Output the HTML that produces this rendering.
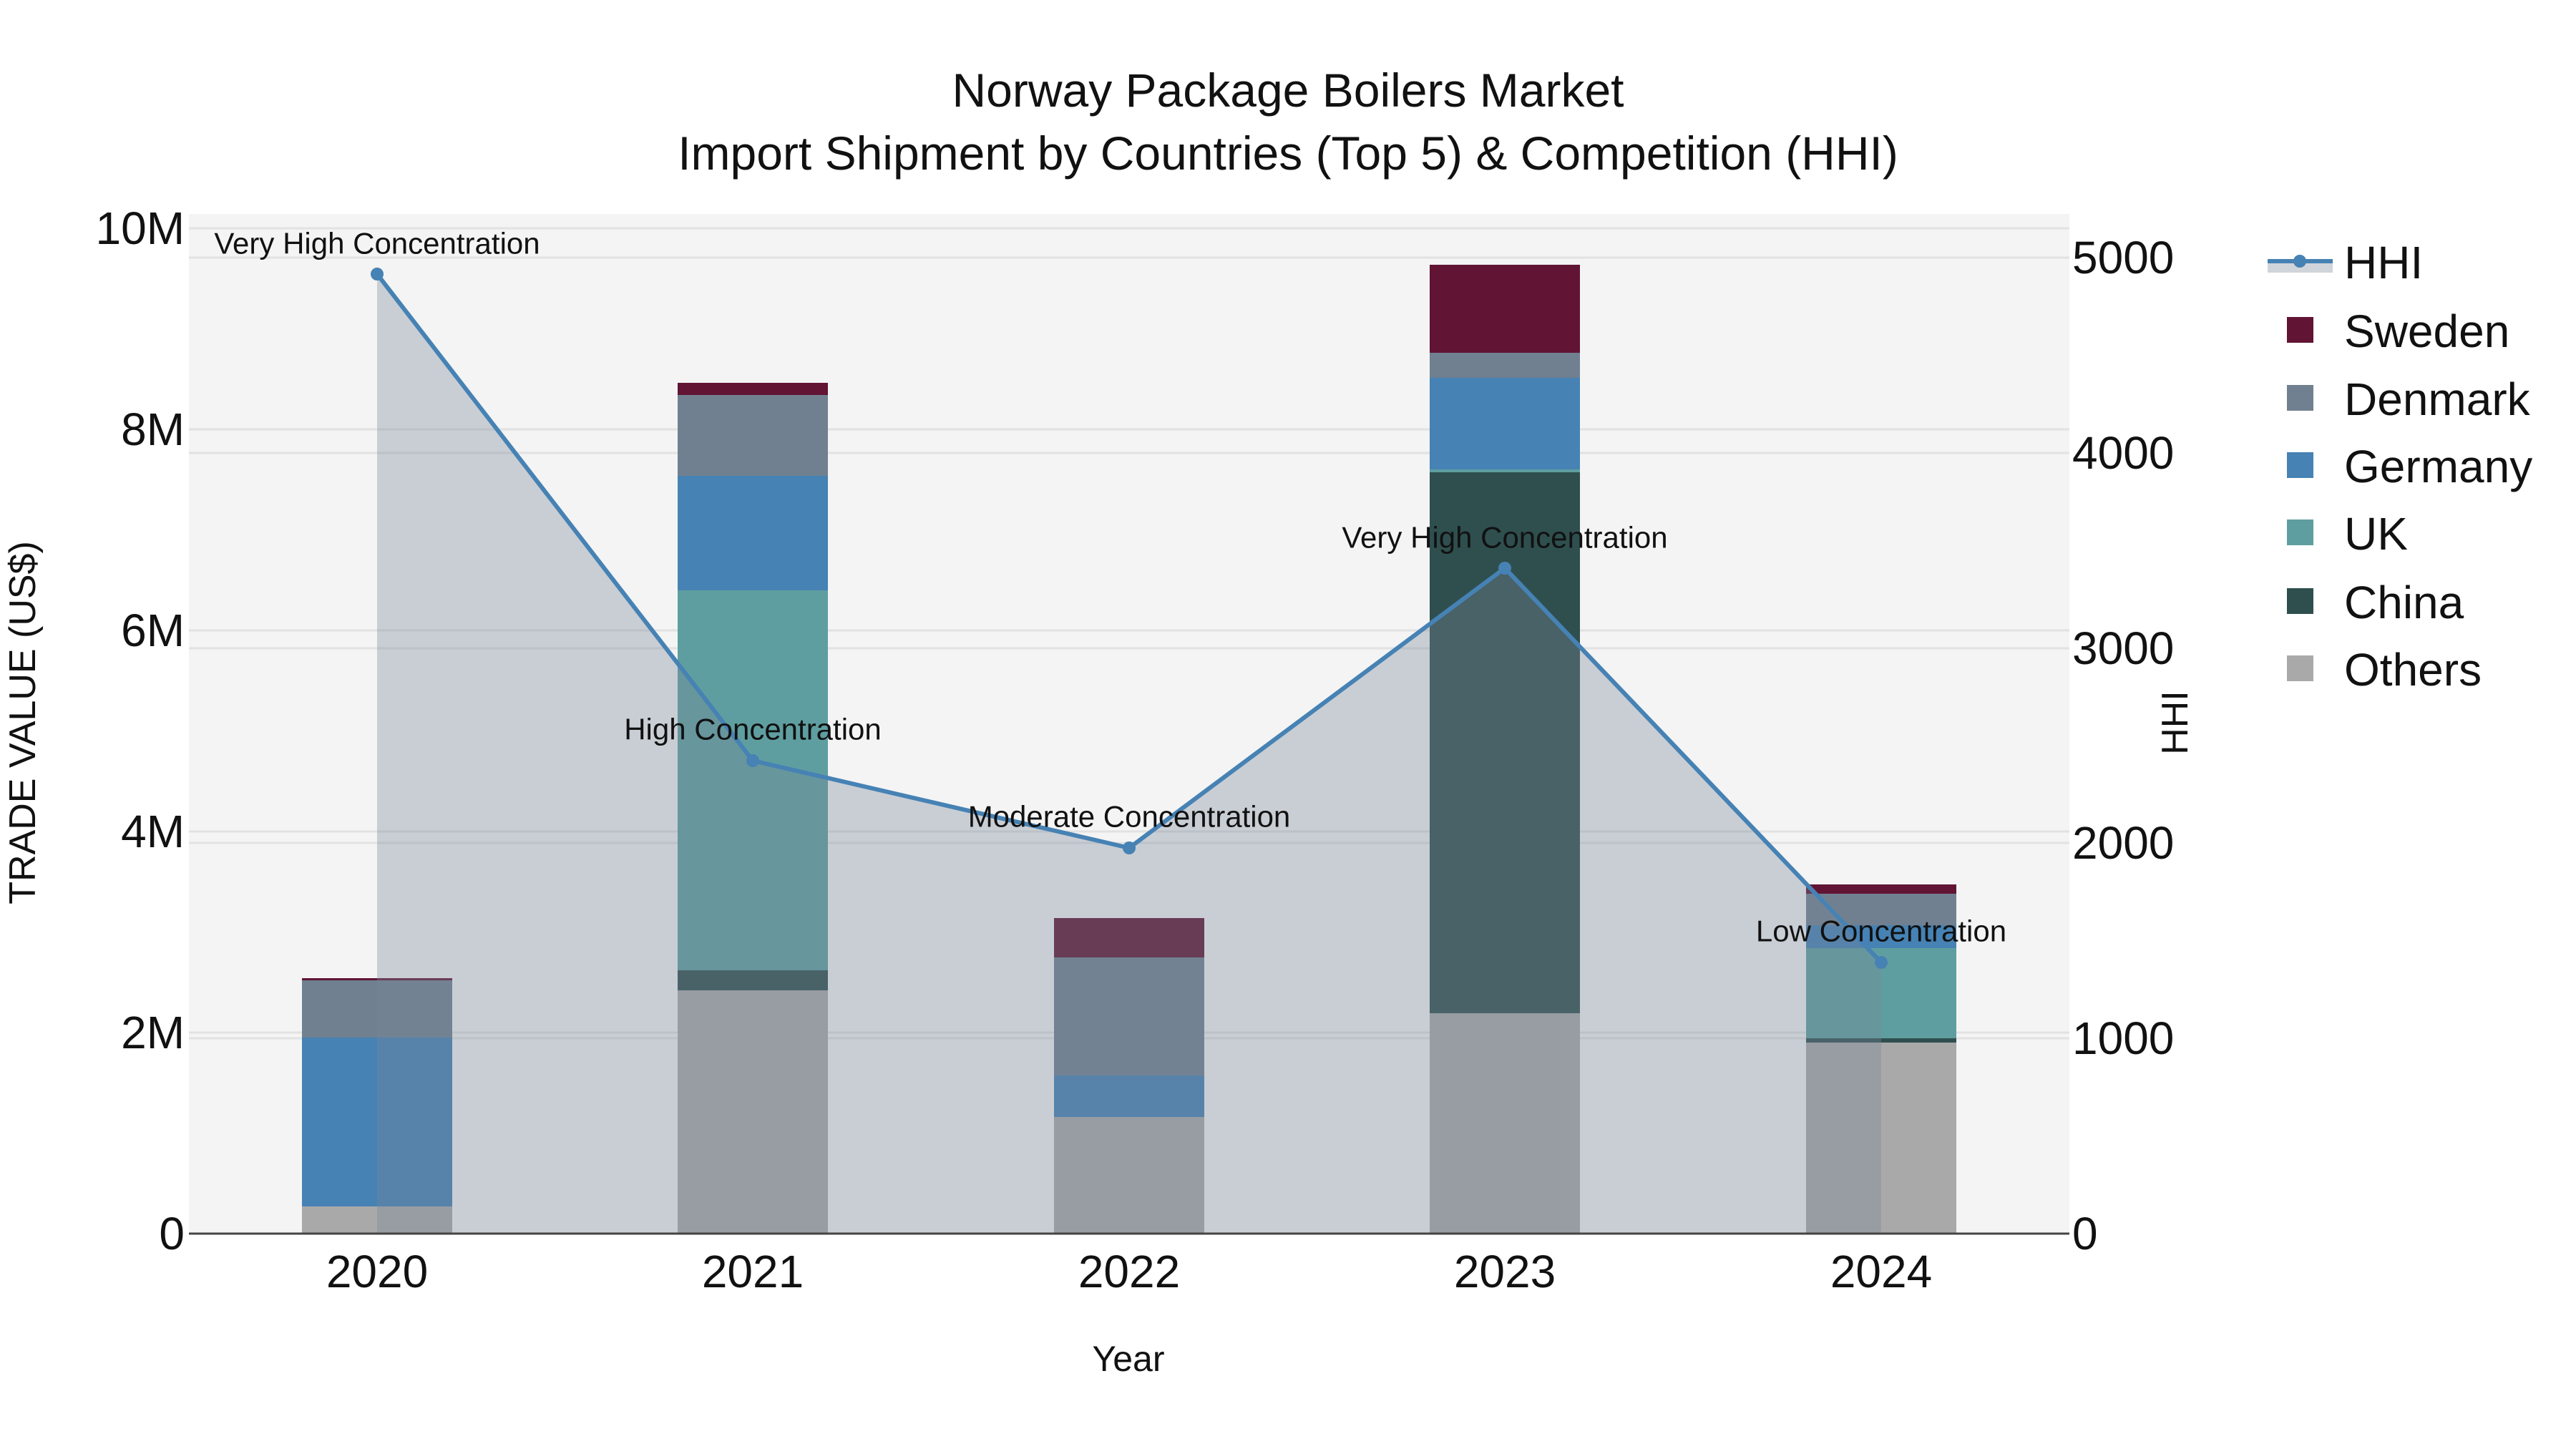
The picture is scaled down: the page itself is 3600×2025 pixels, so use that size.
<!DOCTYPE html>
<html><head><meta charset="utf-8"><style>
html,body{margin:0;padding:0;background:#fff;}
svg{display:block;}
text{font-family:"Liberation Sans",Arial,sans-serif;fill:#111;}
</style></head><body>
<svg width="3600" height="2025" viewBox="0 0 3600 2025" xmlns="http://www.w3.org/2000/svg">
<rect x="0" y="0" width="3600" height="2025" fill="#fff"/>
<rect x="264" y="299" width="2628" height="1425" fill="#f4f4f4"/>
<g stroke="#e2e2e2" stroke-width="3">
<line x1="264" x2="2892" y1="1443" y2="1443"/><line x1="264" x2="2892" y1="1162" y2="1162"/>
<line x1="264" x2="2892" y1="881" y2="881"/><line x1="264" x2="2892" y1="600" y2="600"/>
<line x1="264" x2="2892" y1="319" y2="319"/>
<line x1="264" x2="2892" y1="1451" y2="1451"/><line x1="264" x2="2892" y1="1178" y2="1178"/>
<line x1="264" x2="2892" y1="906" y2="906"/><line x1="264" x2="2892" y1="633" y2="633"/>
<line x1="264" x2="2892" y1="360" y2="360"/>
</g>
<g>
<rect x="422" y="1686" width="210" height="38" fill="#a9a9a9"/>
<rect x="422" y="1450" width="210" height="236" fill="#4682b4"/>
<rect x="422" y="1370" width="210" height="80" fill="#708090"/>
<rect x="422" y="1367" width="210" height="3" fill="#611434"/>
<rect x="947" y="1384" width="210" height="340" fill="#a9a9a9"/>
<rect x="947" y="1356" width="210" height="28" fill="#2f4f4f"/>
<rect x="947" y="825" width="210" height="531" fill="#5f9ea0"/>
<rect x="947" y="665" width="210" height="160" fill="#4682b4"/>
<rect x="947" y="552" width="210" height="113" fill="#708090"/>
<rect x="947" y="535" width="210" height="17" fill="#611434"/>
<rect x="1473" y="1561" width="210" height="163" fill="#a9a9a9"/>
<rect x="1473" y="1503" width="210" height="58" fill="#4682b4"/>
<rect x="1473" y="1338" width="210" height="165" fill="#708090"/>
<rect x="1473" y="1283" width="210" height="55" fill="#611434"/>
<rect x="1998" y="1416" width="210" height="308" fill="#a9a9a9"/>
<rect x="1998" y="660" width="210" height="756" fill="#2f4f4f"/>
<rect x="1998" y="656" width="210" height="4" fill="#5f9ea0"/>
<rect x="1998" y="528" width="210" height="128" fill="#4682b4"/>
<rect x="1998" y="493" width="210" height="35" fill="#708090"/>
<rect x="1998" y="370" width="210" height="123" fill="#611434"/>
<rect x="2524" y="1457" width="210" height="267" fill="#a9a9a9"/>
<rect x="2524" y="1451" width="210" height="6" fill="#2f4f4f"/>
<rect x="2524" y="1325" width="210" height="126" fill="#5f9ea0"/>
<rect x="2524" y="1293" width="210" height="32" fill="#4682b4"/>
<rect x="2524" y="1249" width="210" height="44" fill="#708090"/>
<rect x="2524" y="1236" width="210" height="13" fill="#611434"/>
</g>
<polygon points="527,1724 527,383 1052,1063 1578,1185 2103,794 2629,1345 2629,1724" fill="rgba(119,136,153,0.35)"/>
<polyline points="527,383 1052,1063 1578,1185 2103,794 2629,1345" fill="none" stroke="#4682b4" stroke-width="6" stroke-linejoin="round"/>
<g fill="#4682b4">
<circle cx="527" cy="383" r="9"/><circle cx="1052" cy="1063" r="9"/><circle cx="1578" cy="1185" r="9"/>
<circle cx="2103" cy="794" r="9"/><circle cx="2629" cy="1345" r="9"/>
</g>
<line x1="264" x2="2892" y1="1724" y2="1724" stroke="#444" stroke-width="3"/>
<g font-size="42" text-anchor="middle" dominant-baseline="central">
<text x="527" y="340">Very High Concentration</text>
<text x="1052" y="1019">High Concentration</text>
<text x="1578" y="1141">Moderate Concentration</text>
<text x="2103" y="751">Very High Concentration</text>
<text x="2629" y="1301">Low Concentration</text>
</g>
<g font-size="64" text-anchor="end" dominant-baseline="central">
<text x="258" y="1724">0</text><text x="258" y="1443">2M</text><text x="258" y="1162">4M</text>
<text x="258" y="881">6M</text><text x="258" y="600">8M</text><text x="258" y="319">10M</text>
</g>
<g font-size="64" text-anchor="start" dominant-baseline="central">
<text x="2896" y="1724">0</text><text x="2896" y="1451">1000</text><text x="2896" y="1178">2000</text>
<text x="2896" y="906">3000</text><text x="2896" y="633">4000</text><text x="2896" y="360">5000</text>
</g>
<g font-size="64" text-anchor="middle" dominant-baseline="central">
<text x="527" y="1777">2020</text><text x="1052" y="1777">2021</text><text x="1578" y="1777">2022</text>
<text x="2103" y="1777">2023</text><text x="2629" y="1777">2024</text>
</g>
<g font-size="66" text-anchor="middle" dominant-baseline="central">
<text x="1800" y="126">Norway Package Boilers Market</text>
<text x="1800" y="214">Import Shipment by Countries (Top 5) &amp; Competition (HHI)</text>
</g>
<text x="1577" y="1899" font-size="50" text-anchor="middle" dominant-baseline="central">Year</text>
<text transform="translate(32,1010) rotate(-90)" font-size="52" text-anchor="middle" dominant-baseline="central">TRADE VALUE (US$)</text>
<text transform="translate(3040,1010) rotate(-90)" font-size="52" text-anchor="middle" dominant-baseline="central">HHI</text>
<rect x="3169" y="365" width="91" height="16" fill="rgba(119,136,153,0.35)"/>
<line x1="3169" x2="3260" y1="365" y2="365" stroke="#4682b4" stroke-width="6"/>
<circle cx="3214" cy="365" r="9" fill="#4682b4"/>
<rect x="3196" y="443" width="37" height="36" fill="#611434"/>
<rect x="3196" y="538" width="37" height="36" fill="#708090"/>
<rect x="3196" y="632" width="37" height="36" fill="#4682b4"/>
<rect x="3196" y="726" width="37" height="36" fill="#5f9ea0"/>
<rect x="3196" y="822" width="37" height="36" fill="#2f4f4f"/>
<rect x="3196" y="916" width="37" height="36" fill="#a9a9a9"/>
<g font-size="64" dominant-baseline="central">
<text x="3276" y="367">HHI</text>
<text x="3276" y="463">Sweden</text>
<text x="3276" y="558">Denmark</text>
<text x="3276" y="652">Germany</text>
<text x="3276" y="746">UK</text>
<text x="3276" y="842">China</text>
<text x="3276" y="936">Others</text>
</g>
</svg>
</body></html>
